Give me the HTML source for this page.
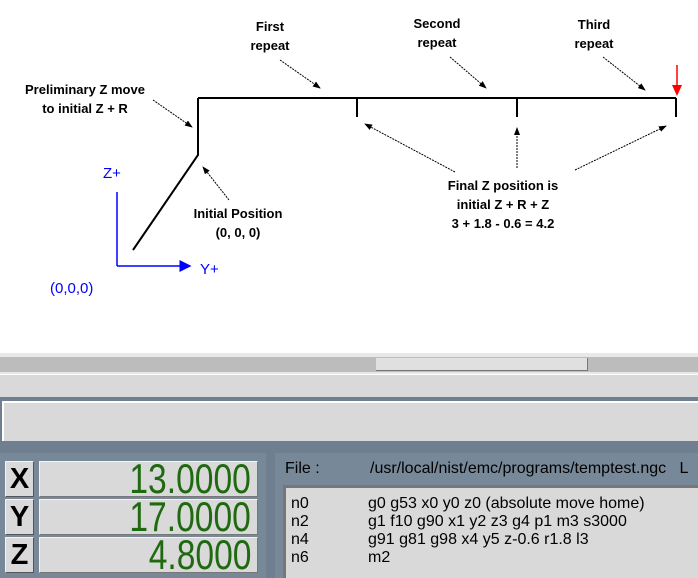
<!DOCTYPE html>
<html><head><meta charset="utf-8"><style>
body{margin:0;width:698px;height:578px;overflow:hidden;background:#fff;font-family:"Liberation Sans",sans-serif;position:relative}
.a{position:absolute}
.b{font-weight:bold;font-size:13px;text-align:center;line-height:19px;color:#000}
.lbl{position:absolute;left:5px;width:27px;height:34px;background:#d9d9d9;border:1px solid #f4f4f4;border-right-color:#555;border-bottom-color:#555;font-size:29px;font-weight:bold;line-height:34px;text-align:center}
.val{position:absolute;left:39px;width:217px;height:34px;background:#d9d9d9;border:1px solid #f4f4f4;border-right-color:#777;border-bottom-color:#777;overflow:hidden}
.val span{position:absolute;right:6px;top:-4px;font-size:42px;color:#1f6a10;line-height:42px;transform:scaleX(.8);transform-origin:right;white-space:nowrap}
.code{font-size:16px;line-height:18px;white-space:pre}
</style></head><body>
<svg class="a" style="left:0;top:0" width="698" height="352">
<defs><marker id="m" markerWidth="8" markerHeight="6" refX="7" refY="3" orient="auto"><path d="M0 0L8 3L0 6z" fill="#000"/></marker>
<marker id="mb" markerWidth="8" markerHeight="8" refX="7" refY="4" orient="auto"><path d="M0 0L8 4L0 8z" fill="#00f"/></marker></defs>
<g stroke="#000" fill="none">
<path d="M198 98H676M198 98V155L133 250" stroke-width="2"/>
<path d="M357 98V117M517 98V117M676 98V117" stroke-width="2"/>
<g stroke-width="1" stroke-dasharray="2 1" marker-end="url(#m)">
<path d="M280 60L320 88"/><path d="M450 57L486 88"/><path d="M603 57L645 90"/>
<path d="M153 100L192 127"/><path d="M229 200L203 167"/>
<path d="M455 172L365 124"/><path d="M517 168L517 128"/><path d="M575 170L666 126"/>
</g></g>
<path d="M677 65V92" stroke="#f00" stroke-width="1.5"/><path d="M672 85L682 85L677 96z" fill="#f00"/>
<path d="M117 266V192M117 266H190" stroke="#00f" stroke-width="1.5" marker-end="url(#mb)"/>
<text x="103" y="178" fill="#00f" font-size="15" font-family="Liberation Sans">Z+</text>
<text x="200" y="274" fill="#00f" font-size="15" font-family="Liberation Sans">Y+</text>
<text x="50" y="293" fill="#00f" font-size="15" font-family="Liberation Sans">(0,0,0)</text>
</svg>
<div class="a b" style="left:230px;top:17px;width:80px">First<br>repeat</div>
<div class="a b" style="left:397px;top:14px;width:80px">Second<br>repeat</div>
<div class="a b" style="left:554px;top:15px;width:80px">Third<br>repeat</div>
<div class="a b" style="left:0;top:80px;width:170px">Preliminary Z move<br>to initial Z + R</div>
<div class="a b" style="left:168px;top:204px;width:140px">Initial Position<br>(0, 0, 0)</div>
<div class="a b" style="left:413px;top:176px;width:180px">Final Z position is<br>initial Z + R + Z<br>3 + 1.8 - 0.6 = 4.2</div>
<div class="a" style="left:0;top:353px;width:698px;height:21px;background:#e8e8e8"></div>
<div class="a" style="left:0;top:357px;width:698px;height:15px;background:#bcbcbc"></div>
<div class="a" style="left:376px;top:358px;width:211px;height:12px;background:#e0e0e0;border-bottom:1px solid #777;border-right:1px solid #777"></div>
<div class="a" style="left:0;top:375px;width:698px;height:22px;background:#d9d9d9"></div>
<div class="a" style="left:0;top:397px;width:698px;height:181px;background:#6f7f8f"></div>
<div class="a" style="left:2px;top:401px;width:696px;height:38px;background:#d9d9d9;border-top:2px solid #fff;border-left:2px solid #fff"></div>
<div class="a" style="left:0;top:453px;width:266px;height:125px;background:#778899"></div>
<div class="lbl" style="top:461px">X</div><div class="val" style="top:461px"><span>13.0000</span></div>
<div class="lbl" style="top:499px">Y</div><div class="val" style="top:499px"><span>17.0000</span></div>
<div class="lbl" style="top:537px">Z</div><div class="val" style="top:537px"><span>4.8000</span></div>
<div class="a" style="left:275px;top:453px;width:423px;height:125px;background:#778899"></div>
<div class="a code" style="left:285px;top:460px">File :</div>
<div class="a code" style="left:370px;top:460px">/usr/local/nist/emc/programs/temptest.ngc   L</div>
<div class="a" style="left:283px;top:485px;width:415px;height:93px;background:#d9d9d9;border-top:3px solid #777;border-left:3px solid #777;box-sizing:border-box"></div>
<div class="a code" style="left:291px;top:495px">n0
n2
n4
n6</div>
<div class="a code" style="left:368px;top:495px">g0 g53 x0 y0 z0 (absolute move home)
g1 f10 g90 x1 y2 z3 g4 p1 m3 s3000
g91 g81 g98 x4 y5 z-0.6 r1.8 l3
m2</div>
</body></html>
